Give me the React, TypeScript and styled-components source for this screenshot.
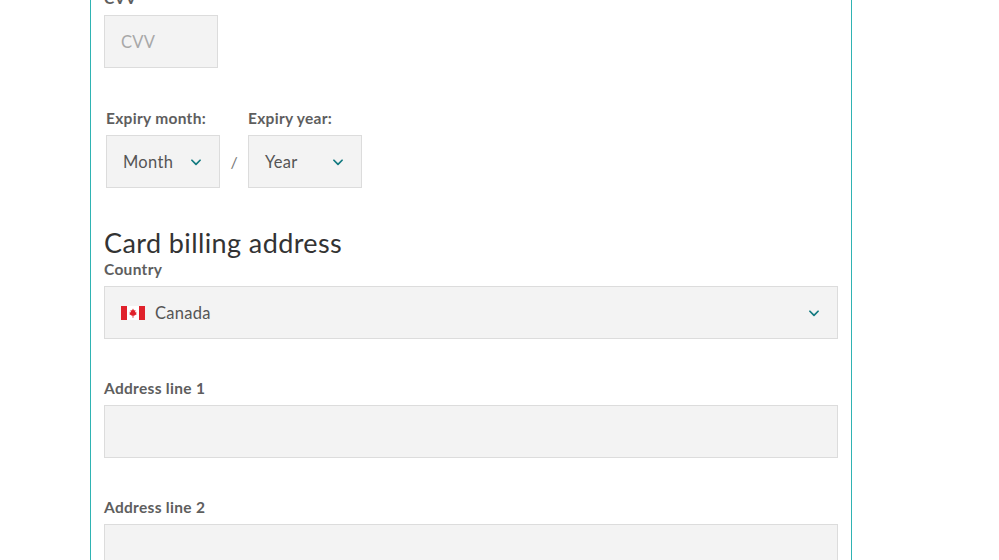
import React from 'react';
import styled, { createGlobalStyle } from 'styled-components';

const Global = createGlobalStyle`
  body { margin: 0; background: #fff; font-family: Lato, "Open Sans", sans-serif; color: #444; }
`;

const Page = styled.div`
  height: 560px;
  overflow: hidden;
`;

const Panel = styled.div`
  margin: -11px 0 0 90px;
  width: 762px;
  border-left: 1px solid #2fb3b3;
  border-right: 1px solid #2fb3b3;
  padding: 0 13px 40px 13px;
  box-sizing: border-box;
  height: 620px;
`;

const Label = styled.div<{ $mt?: number }>`
  font-size: 15.5px;
  font-weight: 700;
  color: #5e5e5e;
  letter-spacing: 0.3px;
  margin-top: ${p => p.$mt ?? 0}px;
  height: 18px;
  line-height: 18px;
`;

const Box = styled.div<{ $w?: string }>`
  box-sizing: border-box;
  width: ${p => p.$w ?? '734px'};
  height: 53px;
  background: #f3f3f3;
  border: 1px solid #dcdcdc;
  display: flex;
  align-items: center;
  padding: 0 16px;
  gap: 10px;
  font-size: 16.5px;
  letter-spacing: 0.3px;
  color: #555;
  margin-top: 8px;
`;

const Placeholder = styled.span`
  color: #a8a8a8;
`;

const Grow = styled.span`
  flex: 1;
`;

const Row = styled.div`
  display: flex;
  align-items: flex-end;
  margin-top: 41px;
`;

const Field = styled.div`
  margin-left: 2px;
`;

const Slash = styled.div`
  width: 28px;
  height: 53px;
  display: flex;
  align-items: center;
  justify-content: center;
  color: #777;
  font-size: 16px;
`;

const Heading = styled.h2`
  font-size: 27px;
  font-weight: 400;
  color: #333;
  letter-spacing: 0.4px;
  margin: 40px 0 0;
  line-height: 30px;
`;

const Chevron = () => (
  <svg width="14" height="14" viewBox="0 0 24 24" fill="none" stroke="#137a80" strokeWidth="3" strokeLinecap="round" strokeLinejoin="round">
    <polyline points="5 9 12 16 19 9" />
  </svg>
);

const Flag = () => (
  <svg width="24" height="14" viewBox="0 0 24 14">
    <rect width="24" height="14" fill="#fff" />
    <rect width="6" height="14" fill="#e0212b" />
    <rect x="18" width="6" height="14" fill="#e0212b" />
    <path d="M12 2.5 L13 4.5 L14.5 4 L14 6.5 L15.5 5.8 L15 7.5 L16 8 L13 9.8 L12.5 9.5 L12.3 12 L11.7 12 L11.5 9.5 L11 9.8 L8 8 L9 7.5 L8.5 5.8 L10 6.5 L9.5 4 L11 4.5 Z" fill="#e0212b" />
  </svg>
);

export default function App() {
  return (
    <Page>
      <Global />
      <Panel>
        <Label>CVV</Label>
        <Box $w="114px"><Placeholder>CVV</Placeholder></Box>
        <Row>
          <Field>
            <Label>Expiry month:</Label>
            <Box $w="114px"><Grow>Month</Grow><Chevron /></Box>
          </Field>
          <Slash>/</Slash>
          <div>
            <Label>Expiry year:</Label>
            <Box $w="114px"><Grow>Year</Grow><Chevron /></Box>
          </div>
        </Row>
        <Heading>Card billing address</Heading>
        <Label $mt={2}>Country</Label>
        <Box><Flag /><Grow>Canada</Grow><Chevron /></Box>
        <Label $mt={40}>Address line 1</Label>
        <Box />
        <Label $mt={40}>Address line 2</Label>
        <Box />
      </Panel>
    </Page>
  );
}
